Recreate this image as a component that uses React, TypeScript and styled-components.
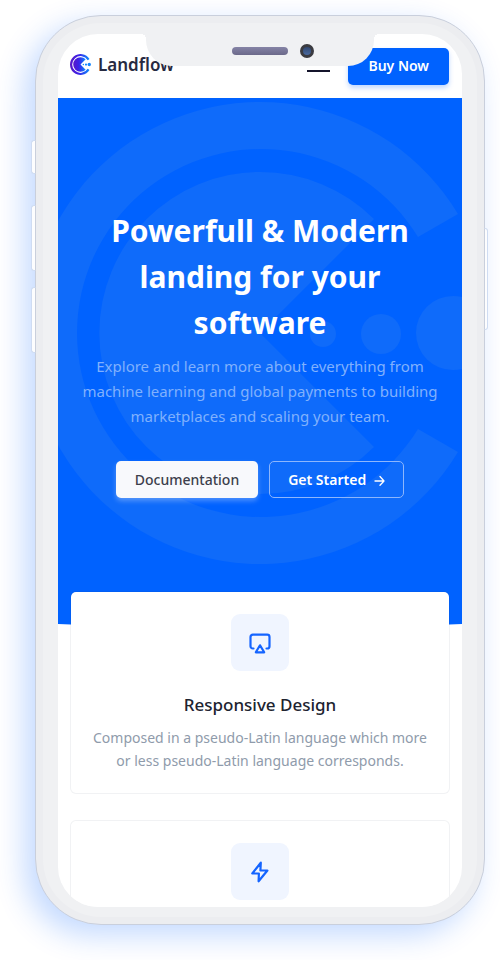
import React from "react";
import styled, { createGlobalStyle, css } from "styled-components";

const GlobalStyle = createGlobalStyle`
  *, *::before, *::after { box-sizing: border-box; }
  body {
    margin: 0;
    background: #fff;
    color: #1f2233;
    font-family: "Noto Sans", "Open Sans", sans-serif;
  }
  h1, h2, p { margin: 0; }
`;

const blue = "#0062ff";

const Page = styled.div`
  display: flex;
  height: 100vh;
  padding: 15px 15px 35px 35px;
  overflow: hidden;
`;

const Phone = styled.div`
  position: relative;
  flex: 1;
  display: flex;
  padding: 7px;
  border: 1px solid #c9cfdc;
  border-radius: 66px;
  background: #ecedf0;
  box-shadow: -10px 10px 30px rgba(0, 98, 255, 0.24);
`;

const Bezel = styled.div`
  position: relative;
  flex: 1;
  min-width: 0;
  display: flex;
  padding: 11px 15px 10px;
  border-radius: 58px;
  background: #f0f1f3;
`;

const SideButton = styled.div<{ $side: "left" | "right"; $top: number; $length: number }>`
  position: absolute;
  top: ${(p) => p.$top}px;
  height: ${(p) => p.$length}px;
  background: #fdfdfe;
  border: 1px solid #cfdcf2;
  ${(p) =>
    p.$side === "left"
      ? css`
          right: 100%;
          width: 5px;
          border-right-color: #c9cfdc;
          border-radius: 3px 0 0 3px;
        `
      : css`
          left: 100%;
          width: 4px;
          border-left-color: #c9cfdc;
          border-radius: 0 3px 3px 0;
        `}
`;

const Screen = styled.div`
  flex: 1;
  min-width: 0;
  overflow: hidden;
  border-radius: 40px;
  background: #fff;
`;

const Notch = styled.div`
  position: absolute;
  top: 11px;
  left: 50%;
  width: 228px;
  height: 32px;
  transform: translateX(-50%);
  display: flex;
  align-items: center;
  justify-content: flex-end;
  gap: 12px;
  padding: 2px 60px 0 0;
  border-radius: 0 0 26px 26px;
  background: #f0f1f3;

  &::before,
  &::after {
    content: "";
    position: absolute;
    top: 0;
    width: 5px;
    height: 5px;
  }
  &::before {
    right: 100%;
    background: radial-gradient(circle at 0 100%, transparent 5px, #f0f1f3 5px);
  }
  &::after {
    left: 100%;
    background: radial-gradient(circle at 100% 100%, transparent 5px, #f0f1f3 5px);
  }
`;

const Speaker = styled.div`
  width: 56px;
  height: 8px;
  border-radius: 4px;
  background: linear-gradient(#8583a6, #6b698a);
`;

const Camera = styled.div`
  width: 14px;
  height: 14px;
  border: 3px solid #3b3b40;
  border-radius: 50%;
  background: linear-gradient(#31476f, #4a6aa0);
`;

const Header = styled.header`
  display: flex;
  align-items: center;
  height: 64px;
  padding: 0 13px 0 12px;
`;

const Brand = styled.a`
  display: flex;
  align-items: center;
  gap: 7px;
  margin-right: auto;
  padding-bottom: 3px;
  color: #272a41;
  font-size: 17px;
  font-weight: 600;
  line-height: 24px;
  text-decoration: none;
`;

const MenuButton = styled.button`
  display: flex;
  flex-direction: column;
  gap: 5px;
  margin-right: 18px;
  padding: 0 0 4px;
  border: 0;
  background: none;
`;

const MenuLine = styled.span`
  width: 23px;
  height: 2px;
  background: #14142b;
`;

const Button = styled.button<{ $kind: "primary" | "light" | "outline" }>`
  display: inline-flex;
  align-items: center;
  justify-content: center;
  gap: 8px;
  height: 37px;
  padding: 0 18px;
  border: 1px solid transparent;
  border-radius: 5px;
  font-family: inherit;
  font-size: 14px;
  font-weight: 600;
  line-height: 20px;
  white-space: nowrap;
  ${(p) =>
    p.$kind === "primary" &&
    css`
      padding: 0 19px;
      background: ${blue};
      color: #fff;
      box-shadow: 0 3px 5px rgba(0, 98, 255, 0.25);
    `}
  ${(p) =>
    p.$kind === "light" &&
    css`
      background: #f8f9fc;
      color: #3c3f4c;
      font-weight: 500;
      box-shadow: 0 3px 5px rgba(248, 249, 252, 0.3);
    `}
  ${(p) =>
    p.$kind === "outline" &&
    css`
      border-color: #8db6fc;
      background: transparent;
      color: #fff;
    `}
`;

const Hero = styled.section`
  position: relative;
  padding: 110px 12px 134px;
  background: ${blue};
  clip-path: polygon(0 0, 100% 0, 100% calc(100% - 8px), 50% 100%, 0 calc(100% - 8px));
  text-align: center;
`;

const Emblem = styled.svg`
  position: absolute;
  top: 4px;
  left: 50%;
  width: 462px;
  height: 462px;
  transform: translateX(-50%);
  fill: #0f6bfa;
`;

const HeroContent = styled.div`
  position: relative;
`;

const HeroTitle = styled.h1`
  color: #fff;
  font-size: 30px;
  font-weight: 700;
  line-height: 46px;
`;

const HeroText = styled.p`
  margin-top: 8px;
  color: #80b1fd;
  font-size: 15px;
  line-height: 25px;
`;

const HeroActions = styled.div`
  display: flex;
  justify-content: center;
  gap: 11px;
  margin-top: 32px;
`;

const Features = styled.main`
  position: relative;
  display: grid;
  gap: 26px;
  margin-top: -41px;
  padding: 0 12px;
`;

const Card = styled.article`
  display: flex;
  flex-direction: column;
  align-items: center;
  padding: 22px 12px 21px;
  border: 1px solid rgba(20, 30, 60, 0.06);
  border-radius: 6px;
  background: #fff;
  background-clip: padding-box;
  text-align: center;
`;

const IconTile = styled.div`
  display: flex;
  align-items: center;
  justify-content: center;
  width: 58px;
  height: 57px;
  border-radius: 9px;
  background: #f0f5ff;
`;

const CardTitle = styled.h2`
  margin-top: 20px;
  color: #20232f;
  font-size: 17px;
  font-weight: 500;
  line-height: 28px;
`;

const CardText = styled.p`
  margin-top: 7px;
  color: #8f9bab;
  font-size: 14px;
  line-height: 23px;
`;

const CardIcon = styled.svg`
  fill: none;
  stroke: #1464ff;
  stroke-width: 2.2;
  stroke-linecap: round;
  stroke-linejoin: round;
`;

const EmblemShapes = () => (
  <>
    <path d="M429 112A231 231 0 1 0 429 350L389 327A184 184 0 1 1 389 135Z" />
    <path d="M345 117A161 161 0 1 0 345 345L231 231Z" />
  </>
);

const LogoIcon = () => (
  <svg width="21" height="21" viewBox="0 0 462 462" aria-hidden="true">
    <defs>
      <linearGradient id="logo" x1="0" x2="1">
        <stop offset="0" stopColor="#5a17c8" />
        <stop offset="0.45" stopColor="#3b22e8" />
        <stop offset="1" stopColor="#0a8cff" />
      </linearGradient>
    </defs>
    <g fill="url(#logo)">
      <EmblemShapes />
    </g>
    <g fill="#1687ff">
      <circle cx="294" cy="232" r="16" />
      <circle cx="352" cy="232" r="24" />
      <circle cx="424" cy="232" r="37" />
    </g>
  </svg>
);

const AirplayIcon = () => (
  <CardIcon width="24" height="24" viewBox="0 0 24 24" aria-hidden="true">
    <path d="M5.500 17.500H4.800A2.300 2.300 0 0 1 2.500 15.200V6A2.300 2.300 0 0 1 4.800 3.700H19.200A2.300 2.300 0 0 1 21.500 6V15.200A2.300 2.300 0 0 1 19.200 17.500H18.500" />
    <path d="M12 14.300L16.200 21.300H7.800Z" />
  </CardIcon>
);

const BoltIcon = () => (
  <CardIcon width="24" height="24" viewBox="0 0 24 24" aria-hidden="true">
    <path d="M12.800 2.700L4.300 13.500H10.900L10.600 21.300L19.400 10.500H12.400Z" />
  </CardIcon>
);

const ArrowIcon = () => (
  <svg
    width="11"
    height="12"
    viewBox="0 0 11 12"
    fill="none"
    stroke="currentColor"
    strokeWidth="1.3"
    strokeLinecap="round"
    strokeLinejoin="round"
    aria-hidden="true"
  >
    <path d="M1 7H10M6 2.500L10 7L6 11.300" />
  </svg>
);

export default function App() {
  return (
    <>
      <GlobalStyle />
      <Page>
        <Phone>
          <SideButton $side="left" $top={124} $length={34} />
          <SideButton $side="left" $top={189} $length={66} />
          <SideButton $side="left" $top={271} $length={66} />
          <SideButton $side="right" $top={212} $length={102} />
          <Bezel>
            <Screen>
              <Header>
                <Brand href="#">
                  <LogoIcon />
                  Landflow
                </Brand>
                <MenuButton type="button" aria-label="Menu">
                  <MenuLine />
                  <MenuLine />
                  <MenuLine />
                </MenuButton>
                <Button type="button" $kind="primary">
                  Buy Now
                </Button>
              </Header>
              <Hero>
                <Emblem viewBox="0 0 462 462" aria-hidden="true">
                  <EmblemShapes />
                  <circle cx="294" cy="232" r="13" />
                  <circle cx="352" cy="232" r="20" />
                  <circle cx="424" cy="231" r="37" />
                </Emblem>
                <HeroContent>
                  <HeroTitle>
                    Powerfull &amp; Modern
                    <br />
                    landing for your
                    <br />
                    software
                  </HeroTitle>
                  <HeroText>
                    Explore and learn more about everything from
                    <br />
                    machine learning and global payments to building
                    <br />
                    marketplaces and scaling your team.
                  </HeroText>
                  <HeroActions>
                    <Button type="button" $kind="light">
                      Documentation
                    </Button>
                    <Button type="button" $kind="outline">
                      Get Started
                      <ArrowIcon />
                    </Button>
                  </HeroActions>
                </HeroContent>
              </Hero>
              <Features>
                <Card>
                  <IconTile>
                    <AirplayIcon />
                  </IconTile>
                  <CardTitle>Responsive Design</CardTitle>
                  <CardText>
                    Composed in a pseudo-Latin language which more
                    <br />
                    or less pseudo-Latin language corresponds.
                  </CardText>
                </Card>
                <Card>
                  <IconTile>
                    <BoltIcon />
                  </IconTile>
                </Card>
              </Features>
            </Screen>
            <Notch>
              <Speaker />
              <Camera />
            </Notch>
          </Bezel>
        </Phone>
      </Page>
    </>
  );
}
